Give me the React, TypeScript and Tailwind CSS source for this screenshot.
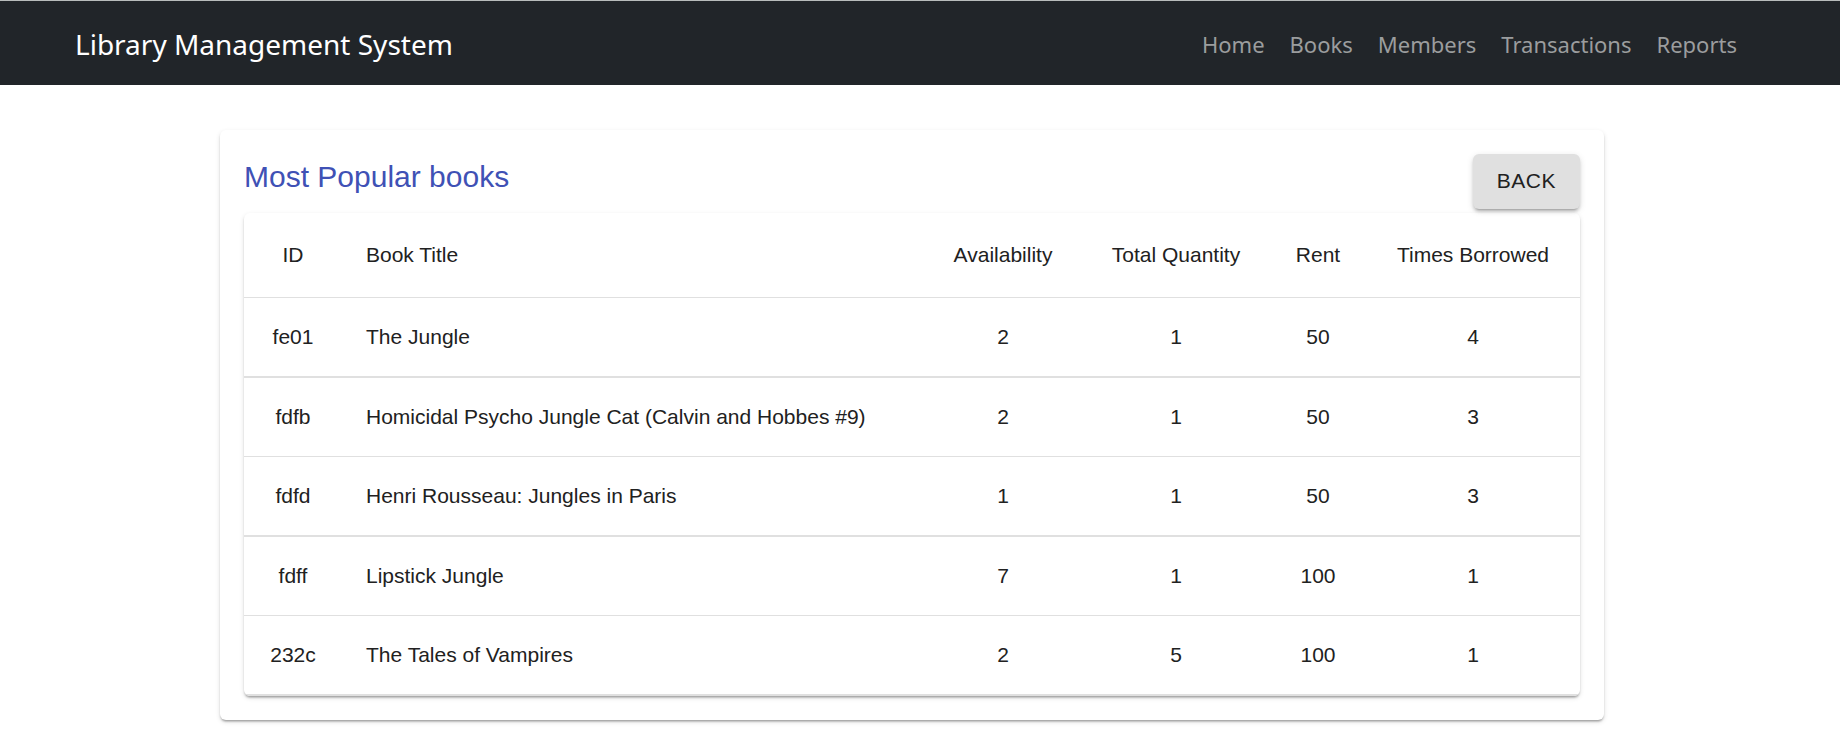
const links = ["Home", "Books", "Members", "Transactions", "Reports"];

const books = [
  { id: "fe01", title: "The Jungle", availability: 2, total: 1, rent: 50, borrowed: 4 },
  { id: "fdfb", title: "Homicidal Psycho Jungle Cat (Calvin and Hobbes #9)", availability: 2, total: 1, rent: 50, borrowed: 3 },
  { id: "fdfd", title: "Henri Rousseau: Jungles in Paris", availability: 1, total: 1, rent: 50, borrowed: 3 },
  { id: "fdff", title: "Lipstick Jungle", availability: 7, total: 1, rent: 100, borrowed: 1 },
  { id: "232c", title: "The Tales of Vampires", availability: 2, total: 5, rent: 100, borrowed: 1 },
];

function NavBar() {
  return (
    <header className="flex items-center justify-between border-t border-[#b8bcbb] bg-[#212529] pb-[19px] pl-[75px] pr-[103px] pt-[21px] font-['Noto_Sans','Open_Sans',sans-serif]">
      <a href="#" className="text-[28px] leading-[44px] text-white">
        Library Management System
      </a>
      <nav className="flex gap-[25px]">
        {links.map((label) => (
          <a key={label} href="#" className="text-[22px] leading-[44px] text-[#9b9d9e]">
            {label}
          </a>
        ))}
      </nav>
    </header>
  );
}

function BookTable() {
  return (
    <div className="overflow-hidden rounded-md bg-white shadow-[0_3px_2px_-2px_rgba(0,0,0,0.2),0_2px_2px_0_rgba(0,0,0,0.14),0_2px_5px_0_rgba(0,0,0,0.12)]">
      <table className="w-full table-fixed border-collapse text-center text-[21px] leading-[30px]">
        <colgroup>
          <col className="w-[98px]" />
          <col />
          <col className="w-[158px]" />
          <col className="w-[188px]" />
          <col className="w-[96px]" />
          <col className="w-[214px]" />
        </colgroup>
        <thead>
          <tr className="h-[84px] border-b border-[#e0e0e0]">
            <th className="font-normal">ID</th>
            <th className="px-6 text-left font-normal">Book Title</th>
            <th className="font-normal">Availability</th>
            <th className="font-normal">Total Quantity</th>
            <th className="font-normal">Rent</th>
            <th className="font-normal">Times Borrowed</th>
          </tr>
        </thead>
        <tbody>
          {books.map((book) => (
            <tr key={book.id} className="border-[#e0e0e0] odd:h-[80px] odd:border-b-2 even:h-[79px] even:border-b">
              <td>{book.id}</td>
              <td className="px-6 text-left">{book.title}</td>
              <td>{book.availability}</td>
              <td>{book.total}</td>
              <td>{book.rent}</td>
              <td>{book.borrowed}</td>
            </tr>
          ))}
        </tbody>
      </table>
    </div>
  );
}

export default function App() {
  return (
    <div className="min-h-screen bg-white font-['Liberation_Sans',Arial,sans-serif] text-[#212121]">
      <NavBar />
      <main className="pb-4 pl-[220px] pr-[236px] pt-[45px]">
        <section className="rounded-md bg-white p-6 shadow-[0_3px_2px_-2px_rgba(0,0,0,0.2),0_2px_2px_0_rgba(0,0,0,0.14),0_2px_5px_0_rgba(0,0,0,0.12)]">
          <div className="flex items-start justify-between pb-1">
            <h1 className="text-[30px] leading-[46px] text-[#3f51b5]">Most Popular books</h1>
            <button
              type="button"
              className="rounded-md bg-[#e0e0e0] px-6 pb-[10px] pt-2 text-[21px] leading-[37px] tracking-wide shadow-[0_4px_2px_-3px_rgba(0,0,0,0.2),0_3px_3px_0_rgba(0,0,0,0.14),0_2px_7px_0_rgba(0,0,0,0.12)]"
            >
              BACK
            </button>
          </div>
          <BookTable />
        </section>
      </main>
    </div>
  );
}
